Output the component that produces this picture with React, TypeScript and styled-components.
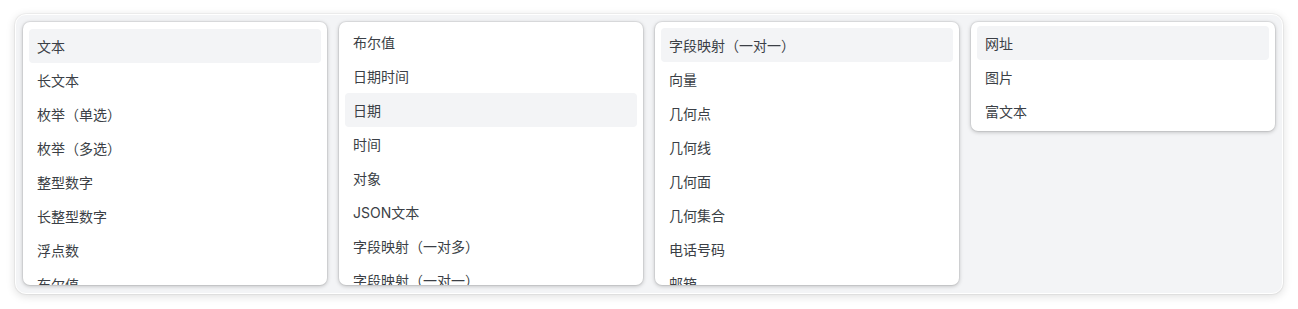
import React from "react";
import styled, { createGlobalStyle } from "styled-components";

const GlobalStyle = createGlobalStyle`
  html, body {
    margin: 0;
    padding: 0;
    background: #ffffff;
    font-family: Inter, "Noto Sans CJK SC", sans-serif;
  }
  #root {
    padding: 14px 15px;
  }
`;

const Board = styled.div`
  width: 1268px;
  height: 280px;
  box-sizing: border-box;
  padding: 7px 7px 8px;
  background: #f3f4f6;
  border-radius: 11px;
  border: 1px solid #ffffff;
  box-shadow: 0 2px 10px rgba(0, 0, 0, 0.14), 0 0 0 1px rgba(0, 0, 0, 0.04);
  display: grid;
  grid-template-columns: repeat(4, 1fr);
  column-gap: 12px;
  align-items: start;
`;

const Panel = styled.div<{ $pt: number }>`
  background: #ffffff;
  border-radius: 7px;
  max-height: 263px;
  overflow: hidden;
  box-sizing: border-box;
  padding: ${(p) => p.$pt}px 6px 3px;
  box-shadow: 0 1px 4px rgba(0, 0, 0, 0.25), 0 0 0 1px rgba(0, 0, 0, 0.05);
`;

const Item = styled.div<{ $active?: boolean }>`
  height: 34px;
  display: flex;
  align-items: center;
  padding: 0 8px;
  border-radius: 4px;
  font-size: 14px;
  color: #3b3f46;
  background: ${(p) => (p.$active ? "#f3f4f6" : "transparent")};
  white-space: nowrap;
`;

const columns: { pt: number; active: number; items: string[] }[] = [
  {
    pt: 7,
    active: 0,
    items: ["文本", "长文本", "枚举（单选）", "枚举（多选）", "整型数字", "长整型数字", "浮点数", "布尔值"],
  },
  {
    pt: 3,
    active: 2,
    items: ["布尔值", "日期时间", "日期", "时间", "对象", "JSON文本", "字段映射（一对多）", "字段映射（一对一）"],
  },
  {
    pt: 6,
    active: 0,
    items: ["字段映射（一对一）", "向量", "几何点", "几何线", "几何面", "几何集合", "电话号码", "邮箱"],
  },
  {
    pt: 4,
    active: 0,
    items: ["网址", "图片", "富文本"],
  },
];

const App = () => {
  return (
    <>
      <GlobalStyle />
      <Board>
        {columns.map((col, i) => (
          <Panel key={i} $pt={col.pt}>
            {col.items.map((label, j) => (
              <Item key={label + j} $active={j === col.active}>
                {label}
              </Item>
            ))}
          </Panel>
        ))}
      </Board>
    </>
  );
};

export default App;
